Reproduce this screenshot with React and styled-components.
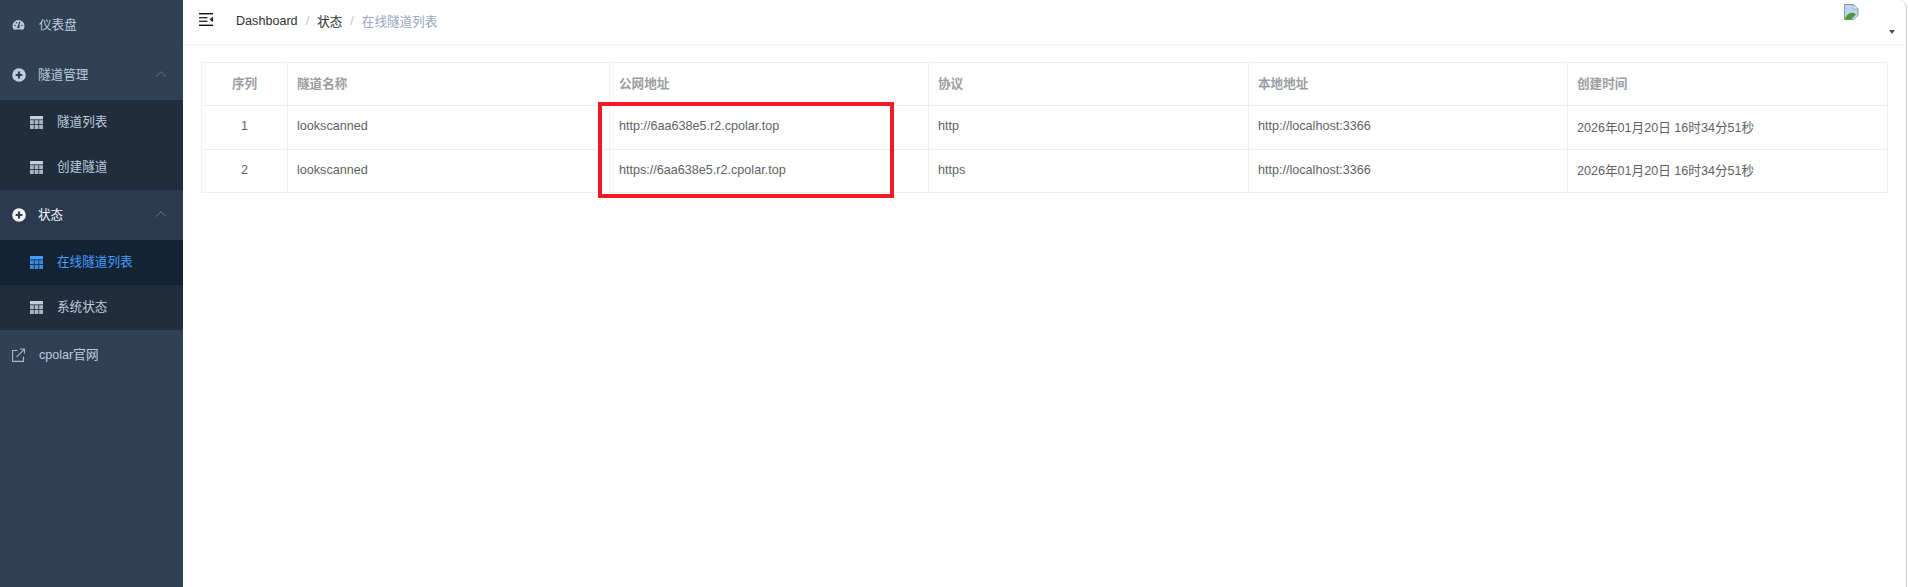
import React from "react";
import styled, { createGlobalStyle } from "styled-components";
import { ChevronUp } from "lucide-react";

const GlobalStyle = createGlobalStyle`
  html, body {
    margin: 0;
    padding: 0;
    height: 100%;
    overflow: hidden;
    background: #fff;
  }
  #root {
    height: 100%;
  }
`;

const FONT = `"Liberation Sans", "Noto Sans CJK SC", sans-serif`;

const Layout = styled.div`
  display: flex;
  height: 587px;
  font-family: ${FONT};
  font-size: 12.6px;
`;

const Sidebar = styled.aside`
  width: 183px;
  flex: none;
  background: #304156;
  color: #bfcbd9;
`;

const TopItem = styled.div`
  height: 50px;
  display: flex;
  align-items: center;
  padding-left: 12px;
  gap: ${(p) => (p.$group ? "12px" : "14px")};
  background: ${(p) => (p.$dim ? "#2b3a4e" : "transparent")};
  color: ${(p) => (p.$bright ? "#f4f4f5" : "#bfcbd9")};
  svg {
    flex: none;
  }
`;

const Label = styled.span`
  padding-bottom: 4px;
`;

const Caret = styled(ChevronUp)`
  margin-left: auto;
  margin-right: 13px;
  margin-top: -2px;
  color: #7f8b9a;
`;

const SubMenu = styled.div`
  background: #1f2d3d;
`;

const SubItem = styled.div`
  height: 45px;
  display: flex;
  align-items: center;
  padding-left: 30px;
  gap: 14px;
  background: ${(p) => (p.$active ? "#142334" : "transparent")};
  color: ${(p) => (p.$active ? "#409eff" : "#bfcbd9")};
`;

const Main = styled.main`
  flex: 1;
  min-width: 0;
  margin-right: 1px;
  border-right: 1px solid #d0d0d0;
  border-top-right-radius: 8px;
  display: flex;
  flex-direction: column;
`;

const TopBar = styled.header`
  height: 44px;
  flex: none;
  display: flex;
  align-items: center;
  padding: 0 11px 0 16px;
  box-shadow: 0 1px 2px rgba(0, 21, 41, 0.08);
  border-top-right-radius: 8px;
`;

const Breadcrumb = styled.nav`
  display: flex;
  align-items: center;
  margin-left: 23px;
  color: #303133;
  margin-top: -3px;
`;

const Sep = styled.span`
  color: #c0c4cc;
  margin: 0 8px;
`;

const Current = styled.span`
  color: #97a8be;
`;

const Avatar = styled.div`
  margin-left: auto;
  width: 51px;
  height: 44px;
  position: relative;
`;

const AvatarCaret = styled.span`
  position: absolute;
  right: 0;
  top: 30px;
  width: 0;
  height: 0;
  border-left: 3.5px solid transparent;
  border-right: 3.5px solid transparent;
  border-top: 4px solid #4a4f57;
`;

const BrokenImage = styled.svg`
  position: absolute;
  left: 0;
  top: 4px;
`;

const Content = styled.div`
  padding: 18px 19px 0 18px;
`;

const TableWrap = styled.div`
  position: relative;
`;

const Table = styled.table`
  width: 1687px;
  table-layout: fixed;
  border-collapse: collapse;
  color: #606266;
`;

const Col = styled.col`
  width: ${(p) => p.$w}px;
`;

const Th = styled.th`
  height: 43px;
  padding: 0 9px 4px;
  box-sizing: border-box;
  border: 1px solid #ebeef5;
  font-weight: 700;
  color: #9a9da3;
  text-align: ${(p) => (p.$center ? "center" : "left")};
`;

const Td = styled.td`
  height: 43.5px;
  padding: 0 9px 2px;
  box-sizing: border-box;
  border: 1px solid #ebeef5;
  text-align: ${(p) => (p.$center ? "center" : "left")};
`;

const Highlight = styled.div`
  position: absolute;
  left: 397px;
  top: 40px;
  width: 296px;
  height: 96px;
  box-sizing: border-box;
  border: 4px solid #ed1c24;
  pointer-events: none;
`;

const GaugeIcon = () => (
  <svg width="13" height="12" viewBox="0 0 13 12" fill="#bfcbd9">
    <path d="M6.5 1A6 6 0 0 0 .5 7c0 1.4.4 2.6 1.1 3.5h9.8c.7-.9 1.1-2.1 1.1-3.5a6 6 0 0 0-6-6z" />
    <g fill="#304156">
      <circle cx="3" cy="6.5" r=".8" />
      <circle cx="4.4" cy="3.8" r=".8" />
      <circle cx="10" cy="6.5" r=".8" />
      <rect x="6" y="2.5" width="1.3" height="5" transform="rotate(14 6.5 7)" />
      <circle cx="6.5" cy="8" r="1.3" />
    </g>
  </svg>
);

const CircleIcon = ({ color }) => (
  <svg width="14" height="14" viewBox="0 0 14 14">
    <circle cx="7" cy="7" r="6.8" fill={color} />
    <path d="M7 3.6v6.8M3.6 7h6.8" stroke="#2f4055" strokeWidth="2.2" />
  </svg>
);

const GridIcon = ({ color }) => (
  <svg width="13" height="13" viewBox="0 0 13 13" fill={color}>
    <rect x="0" y="0" width="13" height="3.4" />
    <rect x="0" y="4.2" width="3.8" height="3.8" opacity=".85" />
    <rect x="4.6" y="4.2" width="3.8" height="3.8" opacity=".85" />
    <rect x="9.2" y="4.2" width="3.8" height="3.8" opacity=".85" />
    <rect x="0" y="8.8" width="3.8" height="4.2" opacity=".85" />
    <rect x="4.6" y="8.8" width="3.8" height="4.2" opacity=".85" />
    <rect x="9.2" y="8.8" width="3.8" height="4.2" opacity=".85" />
  </svg>
);

const LinkIcon = () => (
  <svg width="13" height="14" viewBox="0 0 13 14" fill="none" stroke="#aab6c4" strokeWidth="1.1">
    <path d="M5.5 2.5H.6v10.9h10.9V8.5" />
    <path d="M4.5 9.2L12 1.6M8 1h4.5v4.5" />
  </svg>
);

const FoldIcon = () => (
  <svg width="14" height="13" viewBox="0 0 14 13" style={{ marginTop: "-6px" }}>
    <rect x="0" y="0" width="14" height="1.4" fill="#111" />
    <rect x="0" y="4" width="8.5" height="1.4" fill="#333" />
    <rect x="0" y="7.6" width="8.5" height="1.4" fill="#333" />
    <rect x="0" y="11.6" width="14" height="1.4" fill="#111" />
    <path d="M14 3.6v5.6L10.6 6.4z" fill="#222" />
  </svg>
);

const rows = [
  { id: 1, name: "lookscanned", url: "http://6aa638e5.r2.cpolar.top", proto: "http" },
  { id: 2, name: "lookscanned", url: "https://6aa638e5.r2.cpolar.top", proto: "https" },
];

const widths = [86, 322, 319, 320, 319, 320];
const SUB_ICON = "#c5cfdb";

export default function App() {
  return (
    <>
      <GlobalStyle />
      <Layout>
        <Sidebar>
          <TopItem>
            <GaugeIcon />
            <Label>仪表盘</Label>
          </TopItem>
          <TopItem $group>
            <CircleIcon color="#bfd0e4" />
            <Label>隧道管理</Label>
            <Caret size={18} strokeWidth={1} />
          </TopItem>
          <SubMenu>
            <SubItem>
              <GridIcon color={SUB_ICON} />
              <Label>隧道列表</Label>
            </SubItem>
            <SubItem>
              <GridIcon color={SUB_ICON} />
              <Label>创建隧道</Label>
            </SubItem>
          </SubMenu>
          <TopItem $group $dim $bright>
            <CircleIcon color="#f4f4f5" />
            <Label>状态</Label>
            <Caret size={18} strokeWidth={1} />
          </TopItem>
          <SubMenu>
            <SubItem $active>
              <GridIcon color="#409eff" />
              <Label>在线隧道列表</Label>
            </SubItem>
            <SubItem>
              <GridIcon color={SUB_ICON} />
              <Label>系统状态</Label>
            </SubItem>
          </SubMenu>
          <TopItem>
            <LinkIcon />
            <Label>cpolar官网</Label>
          </TopItem>
        </Sidebar>
        <Main>
          <TopBar>
            <FoldIcon />
            <Breadcrumb>
              <span>Dashboard</span>
              <Sep>/</Sep>
              <span>状态</span>
              <Sep>/</Sep>
              <Current>在线隧道列表</Current>
            </Breadcrumb>
            <Avatar>
              <BrokenImage width="15" height="16" viewBox="0 0 15 16">
                <path d="M.5.5h9l4.5 4.5v10.5H.5z" fill="#bcd6f2" stroke="#8d96a0" strokeWidth="1" />
                <path d="M1 15.5c.6-4 4-7 8-7l3 2-5 5z" fill="#4f9a2f" />
                <path d="M9 .5V5h5z" fill="#f4f4f4" stroke="#8d96a0" strokeWidth=".7" />
                <path d="M9.5 16l5.5-5.5V16z" fill="#fff" />
                <path d="M10 15.5l4-4" stroke="#8d96a0" strokeWidth=".8" />
              </BrokenImage>
              <AvatarCaret />
            </Avatar>
          </TopBar>
          <Content>
            <TableWrap>
              <Table>
                <colgroup>
                  {widths.map((w, i) => (
                    <Col key={i} $w={w} />
                  ))}
                </colgroup>
                <thead>
                  <tr>
                    <Th $center>序列</Th>
                    <Th>隧道名称</Th>
                    <Th>公网地址</Th>
                    <Th>协议</Th>
                    <Th>本地地址</Th>
                    <Th>创建时间</Th>
                  </tr>
                </thead>
                <tbody>
                  {rows.map((r) => (
                    <tr key={r.id}>
                      <Td $center>{r.id}</Td>
                      <Td>{r.name}</Td>
                      <Td>{r.url}</Td>
                      <Td>{r.proto}</Td>
                      <Td>http://localhost:3366</Td>
                      <Td>2026年01月20日 16时34分51秒</Td>
                    </tr>
                  ))}
                </tbody>
              </Table>
              <Highlight />
            </TableWrap>
          </Content>
        </Main>
      </Layout>
    </>
  );
}
